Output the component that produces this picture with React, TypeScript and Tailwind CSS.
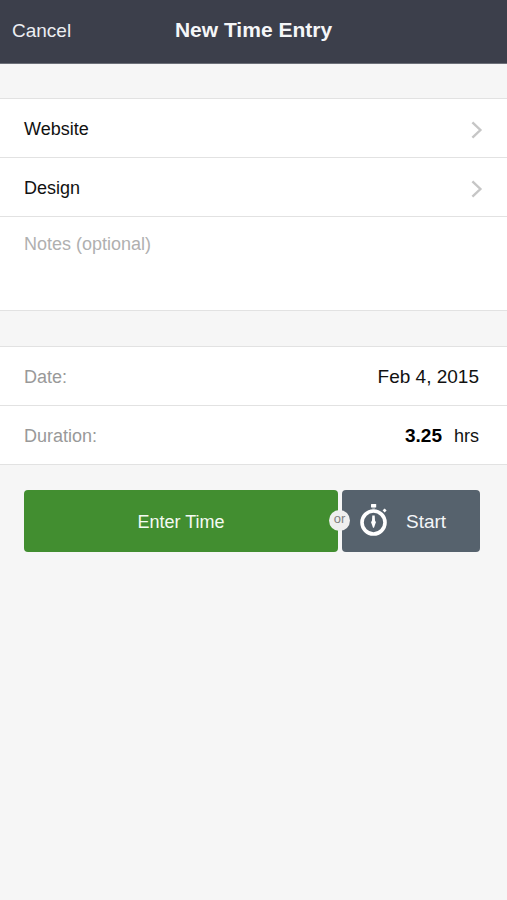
import { useState } from "react";

function Chevron() {
  return (
    <svg
      className="mt-0.5 h-5 w-3"
      viewBox="0 0 12 20"
      fill="none"
      stroke="#c6c6c6"
      strokeWidth="2.4"
      aria-hidden="true"
    >
      <path d="M1.4 2.3 L9.4 10 L1.4 17.7" />
    </svg>
  );
}

function Stopwatch() {
  return (
    <svg className="h-[34px] w-7" viewBox="0 0 28 34" fill="none" aria-hidden="true">
      <circle cx="13.5" cy="18.5" r="11.5" stroke="#fff" strokeWidth="3.6" />
      <rect x="11" y="0" width="5.2" height="3.4" rx="0.5" fill="#fff" />
      <path d="M12.2 3.4h2.8v2h-2.8z" fill="#fff" opacity="0.35" />
      <path d="M24.7 4.4 L26.6 6.5 L24.6 8.4 L22.6 6.3z" fill="#fff" />
      <path
        d="M12.3 11.6h2.4l0.3 5a2.6 2.6 0 0 1 0.2 3.6l-1.2 3.6h-1l-1.2-3.6a2.6 2.6 0 0 1 0.2-3.6z"
        fill="#fff"
      />
    </svg>
  );
}

function PickerRow({ label }: { label: string }) {
  return (
    <button
      type="button"
      className="flex h-[59px] w-full items-center justify-between border-b border-[#e2e2e2] px-6 pt-0.5 text-left text-lg text-[#111]"
    >
      {label}
      <Chevron />
    </button>
  );
}

export default function App() {
  const [notes, setNotes] = useState("");
  const [date, setDate] = useState("Feb 4, 2015");
  const [hours, setHours] = useState("3.25");

  return (
    <div className="min-h-screen bg-[#f6f6f6] font-['Liberation_Sans',Arial,sans-serif] text-lg text-[#111]">
      <header className="grid h-16 grid-cols-[1fr_auto_1fr] items-center border-b border-[#6d7079] bg-[#3c3f4b] px-3 pb-1 text-white">
        <button type="button" className="justify-self-start pt-0.5 text-[19px] leading-6 text-[#eceef2]">
          Cancel
        </button>
        <h1 className="text-[21px] leading-6 font-bold text-[#f5f6f8]">New Time Entry</h1>
      </header>

      <form onSubmit={(e) => e.preventDefault()}>
        <section className="mt-[34px] border-y border-[#e2e2e2] bg-white">
          <PickerRow label="Website" />
          <PickerRow label="Design" />
          <textarea
            aria-label="Notes"
            placeholder="Notes (optional)"
            value={notes}
            onChange={(e) => setNotes(e.target.value)}
            className="block h-[93px] w-full resize-none px-6 pt-3.5 leading-[26px] outline-none placeholder:text-[#b0b0b0]"
          />
        </section>

        <section className="mt-[35px] border-y border-[#e2e2e2] bg-white">
          <div className="flex h-[59px] items-center justify-between border-b border-[#e2e2e2] pt-0.5 pr-7 pl-6">
            <label htmlFor="date" className="text-[#999]">
              Date:
            </label>
            <input
              id="date"
              value={date}
              onChange={(e) => setDate(e.target.value)}
              className="w-40 text-right text-[19px] outline-none"
            />
          </div>
          <div className="flex h-[58px] items-center pt-0.5 pr-7 pl-6">
            <label htmlFor="hours" className="text-[#999]">
              Duration:
            </label>
            <input
              id="hours"
              value={hours}
              onChange={(e) => setHours(e.target.value)}
              className="ml-auto w-24 text-right text-[19px] font-bold text-black outline-none"
            />
            <span className="ml-3">hrs</span>
          </div>
        </section>

        <div className="mt-[25px] flex gap-1 pr-[27px] pl-6">
          <div className="relative flex-1">
            <button
              type="submit"
              className="h-[62px] w-full rounded bg-[#428e30] pt-0.5 text-lg text-[#f4faf2]"
            >
              Enter Time
            </button>
            <span className="absolute top-5 -right-3 z-10 flex size-[21px] items-center justify-center rounded-full bg-[#efefef] pb-0.5 text-[13px] text-[#808080]">
              or
            </span>
          </div>
          <button
            type="button"
            className="flex h-[62px] w-[138px] items-center rounded bg-[#56626d] pl-[18px] text-[19px] text-[#f4f6f8]"
          >
            <Stopwatch />
            <span className="ml-[18px] pt-0.5">Start</span>
          </button>
        </div>
      </form>
    </div>
  );
}
